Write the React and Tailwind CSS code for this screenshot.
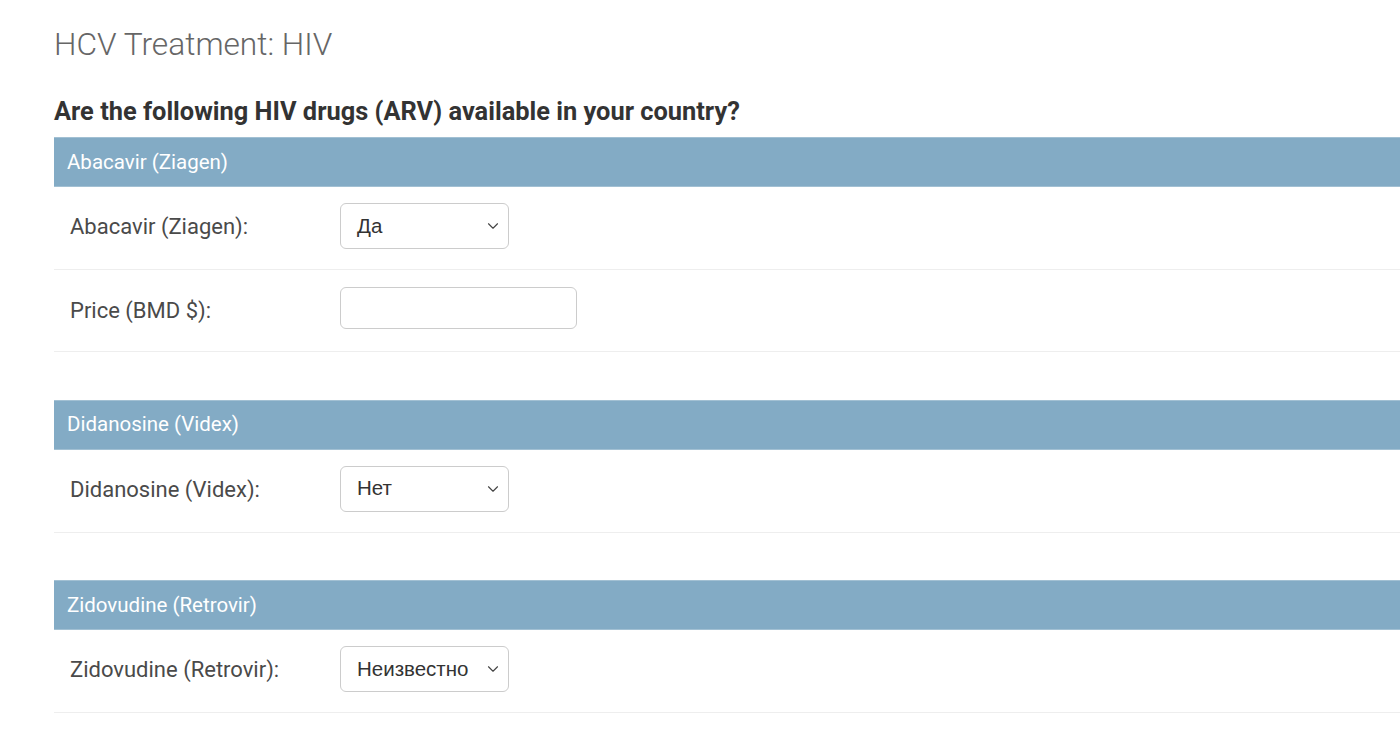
import { ChevronDown } from 'lucide-react';

const sections = [
    {
        title: 'Abacavir (Ziagen)',
        rows: [
            { label: 'Abacavir (Ziagen):', type: 'select', value: 'Да' },
            { label: 'Price (BMD $):', type: 'input' },
        ],
    },
    {
        title: 'Didanosine (Videx)',
        rows: [{ label: 'Didanosine (Videx):', type: 'select', value: 'Нет' }],
    },
    {
        title: 'Zidovudine (Retrovir)',
        rows: [{ label: 'Zidovudine (Retrovir):', type: 'select', value: 'Неизвестно' }],
    },
];

function FakeSelect({ value }) {
    return (
        <div className="w-[169px] h-[46px] border border-[#cccccc] rounded-[6px] bg-white flex items-center justify-between pl-[16px] pr-[6px]">
            <span className="text-[20.5px] text-[#333] font-['Liberation_Sans',Arial,sans-serif]">{value}</span>
            <ChevronDown size={18} strokeWidth={1.5} className="text-[#444]" />
        </div>
    );
}

export default function App() {
    return (
        <div className="min-h-screen bg-white pl-[54px] font-['Roboto',sans-serif] overflow-hidden">
            <h1 className="pt-[27px] text-[31.7px] leading-[36px] font-light text-[#666]">HCV Treatment: HIV</h1>
            <h2 className="mt-[33px] text-[25.4px] leading-[30px] font-bold text-[#333]">
                Are the following HIV drugs (ARV) available in your country?
            </h2>

            <div className="mt-[11px] flex flex-col gap-[47.5px]">
                {sections.map((s) => (
                    <div key={s.title}>
                        <div className="h-[50px] bg-[#83abc5] border-y border-[#a2c0d3] flex items-center px-[13px] text-[20.5px] text-white">
                            {s.title}
                        </div>
                        {s.rows.map((r) => (
                            <div
                                key={r.label}
                                className={`flex items-start border-b border-[#eeeeee] ${r.type === 'select' ? 'h-[83px] pt-[16px]' : 'h-[82px] pt-[17px]'}`}
                            >
                                <label className="w-[286px] pl-[16px] mt-[9px] leading-[30px] text-[22px] text-[#4a4a4a]">
                                    {r.label}
                                </label>
                                {r.type === 'select' ? (
                                    <FakeSelect value={r.value} />
                                ) : (
                                    <div className="w-[237px] h-[42px] border border-[#cccccc] rounded-[6px] bg-white" />
                                )}
                            </div>
                        ))}
                    </div>
                ))}
            </div>
        </div>
    );
}
